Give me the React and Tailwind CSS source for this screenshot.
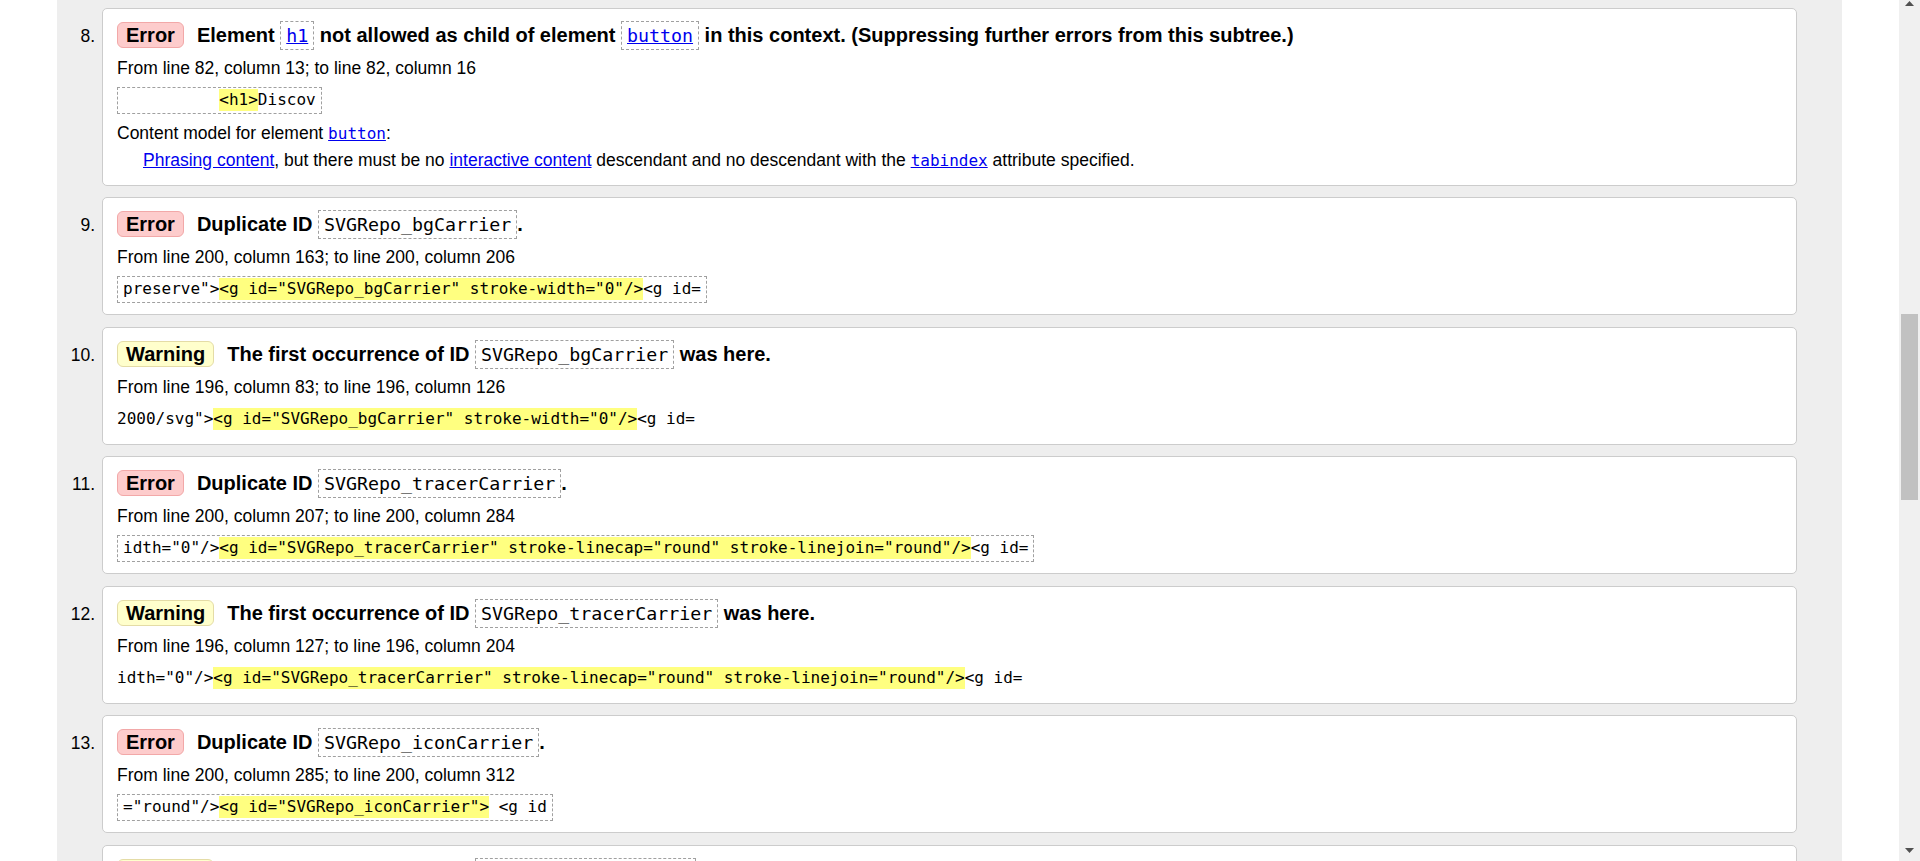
import React from 'react';

const sans = "font-['Liberation_Sans',Arial,sans-serif]";
const mono = "font-['DejaVu_Sans_Mono',monospace]";

const messages = [
  {
    n: 8,
    type: 'error',
    title: [
      'Element ',
      { code: 'h1', link: true },
      ' not allowed as child of element ',
      { code: 'button', link: true },
      ' in this context. (Suppressing further errors from this subtree.)',
    ],
    from: 'From line 82, column 13; to line 82, column 16',
    extract: ['          ', '<h1>', 'Discov'],
    model: true,
  },
  {
    n: 9,
    type: 'error',
    title: ['Duplicate ID ', { code: 'SVGRepo_bgCarrier' }, '.'],
    from: 'From line 200, column 163; to line 200, column 206',
    extract: ['preserve">', '<g id="SVGRepo_bgCarrier" stroke-width="0"/>', '<g id='],
  },
  {
    n: 10,
    type: 'warning',
    title: ['The first occurrence of ID ', { code: 'SVGRepo_bgCarrier' }, ' was here.'],
    from: 'From line 196, column 83; to line 196, column 126',
    extract: ['2000/svg">', '<g id="SVGRepo_bgCarrier" stroke-width="0"/>', '<g id='],
  },
  {
    n: 11,
    type: 'error',
    title: ['Duplicate ID ', { code: 'SVGRepo_tracerCarrier' }, '.'],
    from: 'From line 200, column 207; to line 200, column 284',
    extract: [
      'idth="0"/>',
      '<g id="SVGRepo_tracerCarrier" stroke-linecap="round" stroke-linejoin="round"/>',
      '<g id=',
    ],
  },
  {
    n: 12,
    type: 'warning',
    title: ['The first occurrence of ID ', { code: 'SVGRepo_tracerCarrier' }, ' was here.'],
    from: 'From line 196, column 127; to line 196, column 204',
    extract: [
      'idth="0"/>',
      '<g id="SVGRepo_tracerCarrier" stroke-linecap="round" stroke-linejoin="round"/>',
      '<g id=',
    ],
  },
  {
    n: 13,
    type: 'error',
    title: ['Duplicate ID ', { code: 'SVGRepo_iconCarrier' }, '.'],
    from: 'From line 200, column 285; to line 200, column 312',
    extract: ['="round"/>', '<g id="SVGRepo_iconCarrier">', ' <g id'],
  },
  {
    n: 14,
    type: 'warning',
    title: ['The first occurrence of ID ', { code: 'SVGRepo_iconCarrier' }, ' was here.'],
    from: 'From line 196, column 205; to line 196, column 232',
    extract: ['="round"/>', '<g id="SVGRepo_iconCarrier">', ' <g id'],
  },
];

function Badge({ type }) {
  if (type === 'error') {
    return (
      <span className="inline-block leading-[22px] py-px px-[8px] mr-[13px] border border-[#f2a8a8] bg-[#fdcccc] rounded-[6px]">
        Error
      </span>
    );
  }
  return (
    <span className="inline-block leading-[22px] py-px px-[8px] mr-[13px] border border-[#e4dca6] bg-[#ffffcc] rounded-[6px]">
      Warning
    </span>
  );
}

function TitleCode({ text, link }) {
  return (
    <span
      className={`${mono} inline-block font-normal text-[18.3px] leading-[21px] py-[3px] px-[5px] border border-dashed border-[#a0a0a0]`}
    >
      {link ? <a className="text-[#0000ee] underline">{text}</a> : text}
    </span>
  );
}

function Message({ m }) {
  const isError = m.type === 'error';
  return (
    <div className="flex items-baseline">
      <div className="w-[45px] shrink-0 pr-[7px] text-right text-[17.5px]">{m.n}.</div>
      <div
        className={`flex-1 bg-white border border-[#cccccc] rounded-[5px] pt-[10px] px-[14px] ${
          m.model ? 'pb-[17px]' : 'pb-[10px]'
        }`}
      >
        <div className="h-[32px] leading-[32px] whitespace-nowrap text-[20px] font-bold">
          <Badge type={m.type} />
          {m.title.map((p, i) =>
            typeof p === 'string' ? <span key={i}>{p}</span> : <TitleCode key={i} text={p.code} link={p.link} />
          )}
        </div>
        <div className="h-[35px] leading-[35px] text-[17.5px]">{m.from}</div>
        <div className="h-[29px] flex items-center">
          <span
            className={`${mono} whitespace-pre text-[16px] leading-[22px] ${
              isError ? 'border border-dashed border-[#a0a0a0] pt-px pb-[2px] px-[5px]' : ''
            }`}
          >
            {m.extract[0]}
            <mark className="inline-block bg-[#ffff80] text-black leading-[22px]">{m.extract[1]}</mark>
            {m.extract[2]}
          </span>
        </div>
        {m.model && (
          <>
            <div className="h-[37px] leading-[37px] text-[17.5px] whitespace-nowrap">
              Content model for element{' '}
              <a className={`${mono} text-[16px] text-[#0000ee] underline`}>button</a>:
            </div>
            <div className="h-[16px] leading-[16px] pl-[26px] text-[17.5px] whitespace-nowrap">
              <a className="text-[#0000ee] underline">Phrasing content</a>, but there must be no{' '}
              <a className="text-[#0000ee] underline">interactive content</a> descendant and no descendant with the{' '}
              <a className={`${mono} text-[16px] text-[#0000ee] underline`}>tabindex</a> attribute specified.
            </div>
          </>
        )}
      </div>
    </div>
  );
}

export default function App() {
  return (
    <div className={`${sans} flex w-[1920px] h-[861px] overflow-hidden bg-white text-black`}>
      <div className="w-[1899px] shrink-0 h-full px-[57px]">
        <div className="h-full bg-[#eeeeee] pt-[7.5px] pr-[45px] flex flex-col gap-[11.5px]">
          {messages.map((m) => (
            <Message key={m.n} m={m} />
          ))}
        </div>
      </div>
      {/* scrollbar */}
      <div className="w-[21px] shrink-0 h-full bg-[#f0f0f0] flex flex-col items-center">
        <svg width="9" height="5" viewBox="0 0 9 5" className="mt-px">
          <path d="M0 5 L4.5 0 L9 5 Z" fill="#505050" />
        </svg>
        <div className="mt-[308px] w-[17px] h-[186px] bg-[#c1c1c1]" />
        <div className="flex-1" />
        <svg width="9" height="5" viewBox="0 0 9 5" className="mb-[8px]">
          <path d="M0 0 L9 0 L4.5 5 Z" fill="#505050" />
        </svg>
      </div>
    </div>
  );
}
